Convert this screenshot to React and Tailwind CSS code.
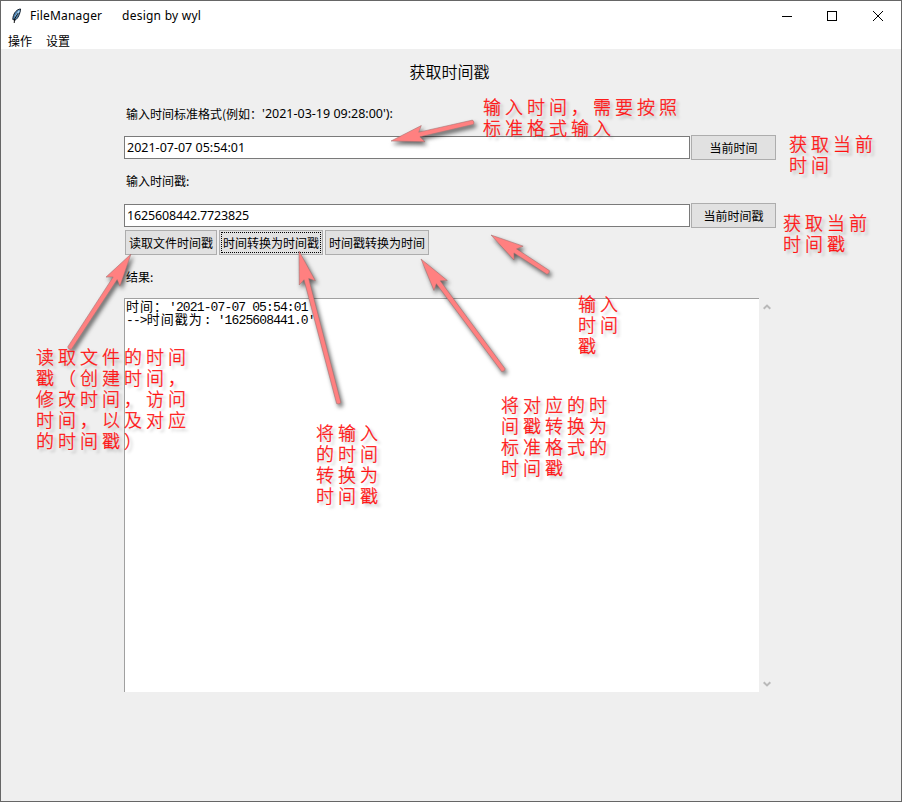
import React from "react";

const CJK = "font-['Noto_Sans_CJK_SC','Noto_Sans',sans-serif]";
const LATIN = "font-['Noto_Sans','Noto_Sans_CJK_SC',sans-serif]";

const arrows = [
  { tip: [391, 141], tail: [474, 122] },
  { tip: [131, 254], tail: [69, 349] },
  { tip: [299, 251], tail: [339, 404] },
  { tip: [421, 259], tail: [504, 371] },
  { tip: [491, 235], tail: [549, 273] },
];

function Arrow({ tip, tail }) {
  const dx = tail[0] - tip[0];
  const dy = tail[1] - tip[1];
  const len = Math.hypot(dx, dy);
  const angle = (Math.atan2(dy, dx) * 180) / Math.PI;
  return (
    <path
      transform={`translate(${tip[0]} ${tip[1]}) rotate(${angle})`}
      d={`M0 0L33 -8.3L29 -2.4L${len - 1} -2.2Q${len + 1} 0 ${len - 1} 2.2L29 2.4L33 8.3Z`}
      fill="#ff8080"
      stroke="#a07070"
      strokeWidth="0.5"
    />
  );
}

function Feather() {
  return (
    <svg className="h-4 w-[11px]" viewBox="0 0 11 16">
      <path d="M9.6 1C6 1.2 3 4.5 2 9.3L1.8 11.5L4 12.2C7 10.6 9 6 9.6 1Z" fill="#4f86b5" stroke="#16202c" strokeWidth="1" />
      <path d="M8.3 2.6L4.6 8.5" stroke="#b9dcf5" strokeWidth="1.2" />
      <path d="M7 5.2L3.6 11L3.2 15" stroke="#111" strokeWidth="1" fill="none" />
    </svg>
  );
}

function Note({ className, lines }) {
  return (
    <div
      className={`absolute whitespace-nowrap text-[18px] font-light leading-[21px] tracking-[4px] text-[#ff1010] [-webkit-text-stroke:0.3px_#ff1010] [text-shadow:3px_3px_3px_rgba(0,0,0,0.25)] ${className}`}
    >
      {lines.map((line) => (
        <div key={line}>{line}</div>
      ))}
    </div>
  );
}

function Button({ className, children, focused }) {
  return (
    <button className={`h-[25px] shrink-0 border border-[#adadad] bg-[#e1e1e1] p-px text-xs leading-[19px] ${className}`}>
      <span className={`flex h-full items-center justify-center ${focused ? "border border-dotted border-black" : ""}`}>
        {children}
      </span>
    </button>
  );
}

function Entry({ className = "", children }) {
  return (
    <div className={`${LATIN} mt-px h-[23px] w-[566px] shrink-0 border border-[#7a7a7a] bg-white pl-0.5 text-[12.5px] leading-[21px] ${className}`}>
      {children}
    </div>
  );
}

function Chevron({ down }) {
  return (
    <svg className="h-2 w-2" viewBox="0 0 8 8">
      <path d={down ? "M0.7 2.2L4 5.4L7.3 2.2" : "M0.7 5.8L4 2.6L7.3 5.8"} fill="none" stroke="#b9b9b9" strokeWidth="2" />
    </svg>
  );
}

export default function App() {
  return (
    <div className={`${CJK} relative flex h-[802px] w-[902px] flex-col overflow-hidden border border-[#666] bg-[#efefef] text-black`}>
      <header className="h-12 shrink-0 bg-white">
        <div className="flex h-[29px] items-center pl-[10px]">
          <Feather />
          <div className={`${LATIN} ml-2 flex flex-1 text-xs`}>
            <span className="w-[92px] tracking-[0.2px]">FileManager</span>
            <span className="tracking-[0.25px]">design by wyl</span>
          </div>
          <svg className="mr-4 h-3 w-[104px] shrink-0" viewBox="0 0 104 12" fill="none" stroke="#000" shapeRendering="crispEdges">
            <path d="M1 6.5H11" />
            <rect x="46.5" y="1.5" width="9" height="9" />
            <path d="M92 1L102 11M102 1L92 11" shapeRendering="auto" />
          </svg>
        </div>
        <nav className="flex gap-[14px] pl-[7px] text-xs leading-[22px]">
          <span>操作</span>
          <span>设置</span>
        </nav>
      </header>

      <main className="ml-[123px] flex w-[652px] flex-col">
        <h1 className="pr-px pt-[11px] text-center text-base font-[350] leading-[22px]">获取时间戳</h1>
        <div className="mt-[22px] flex h-5 pl-0.5 text-xs leading-5">
          <span>输入时间标准格式(例如：</span>
          <span className={`${LATIN} text-[12.5px]`}>'2021-03-19 09:28:00'):</span>
        </div>
        <div className="mt-[11px] flex h-[25px] gap-px">
          <Entry>2021-07-07 05:54:01</Entry>
          <Button className="w-[85px]">当前时间</Button>
        </div>
        <div className="mt-[11px] h-5 pl-0.5 text-xs leading-5">输入时间戳:</div>
        <div className="mt-[12px] flex h-[25px] gap-px">
          <Entry className="tracking-[-0.16px]">1625608442.7723825</Entry>
          <Button className="w-[85px]">当前时间戳</Button>
        </div>
        <div className="mt-0.5 flex gap-0.5 pl-px">
          <Button className="w-[92px]">读取文件时间戳</Button>
          <Button className="w-[104px]" focused>时间转换为时间戳</Button>
          <Button className="w-[104px]">时间戳转换为时间</Button>
        </div>
        <div className="mt-[12px] h-5 pl-0.5 text-xs leading-5">结果:</div>
        <div className="mt-[11px] flex h-[394px]">
          <div className="w-[635px] border-l border-t border-[#a0a0a0] bg-white pl-px pt-[2px] font-['Liberation_Mono','Noto_Sans_CJK_SC',monospace] text-[13px] leading-[13px] tracking-[-0.87px]">
            <div className="flex h-[13px] whitespace-pre">
              <span className="w-[50px] tracking-[1px]">时间：</span>
              <span className="-ml-[7px]">'2021-07-07 05:54:01'</span>
            </div>
            <div className="flex h-[13px] whitespace-pre">
              <span>--&gt;</span>
              <span className="tracking-[1px]">时间戳为</span>
              <span className="ml-px">: '1625608441.0'</span>
            </div>
          </div>
          <div className="flex w-[15px] flex-col items-center justify-between pb-1 pt-[5px]">
            <Chevron />
            <Chevron down />
          </div>
        </div>
      </main>

      <svg
        className="pointer-events-none absolute -left-px -top-px h-[802px] w-[902px] [filter:drop-shadow(2px_3px_2px_rgba(0,0,0,0.6))]"
        viewBox="0 0 902 802"
      >
        {arrows.map((a) => (
          <Arrow key={a.tip.join()} {...a} />
        ))}
      </svg>

      <Note className="left-[482px] top-[95px]" lines={["输入时间，需要按照", "标准格式输入"]} />
      <Note className="left-[788px] top-[132px]" lines={["获取当前", "时间"]} />
      <Note className="left-[782px] top-[211px]" lines={["获取当前", "时间戳"]} />
      <Note className="left-[577px] top-[292px]" lines={["输入", "时间", "戳"]} />
      <Note className="left-[35px] top-[345px]" lines={["读取文件的时间", "戳（创建时间，", "修改时间，访问", "时间，以及对应", "的时间戳）"]} />
      <Note className="left-[315px] top-[421px]" lines={["将输入", "的时间", "转换为", "时间戳"]} />
      <Note className="left-[500px] top-[393px]" lines={["将对应的时", "间戳转换为", "标准格式的", "时间戳"]} />
    </div>
  );
}
